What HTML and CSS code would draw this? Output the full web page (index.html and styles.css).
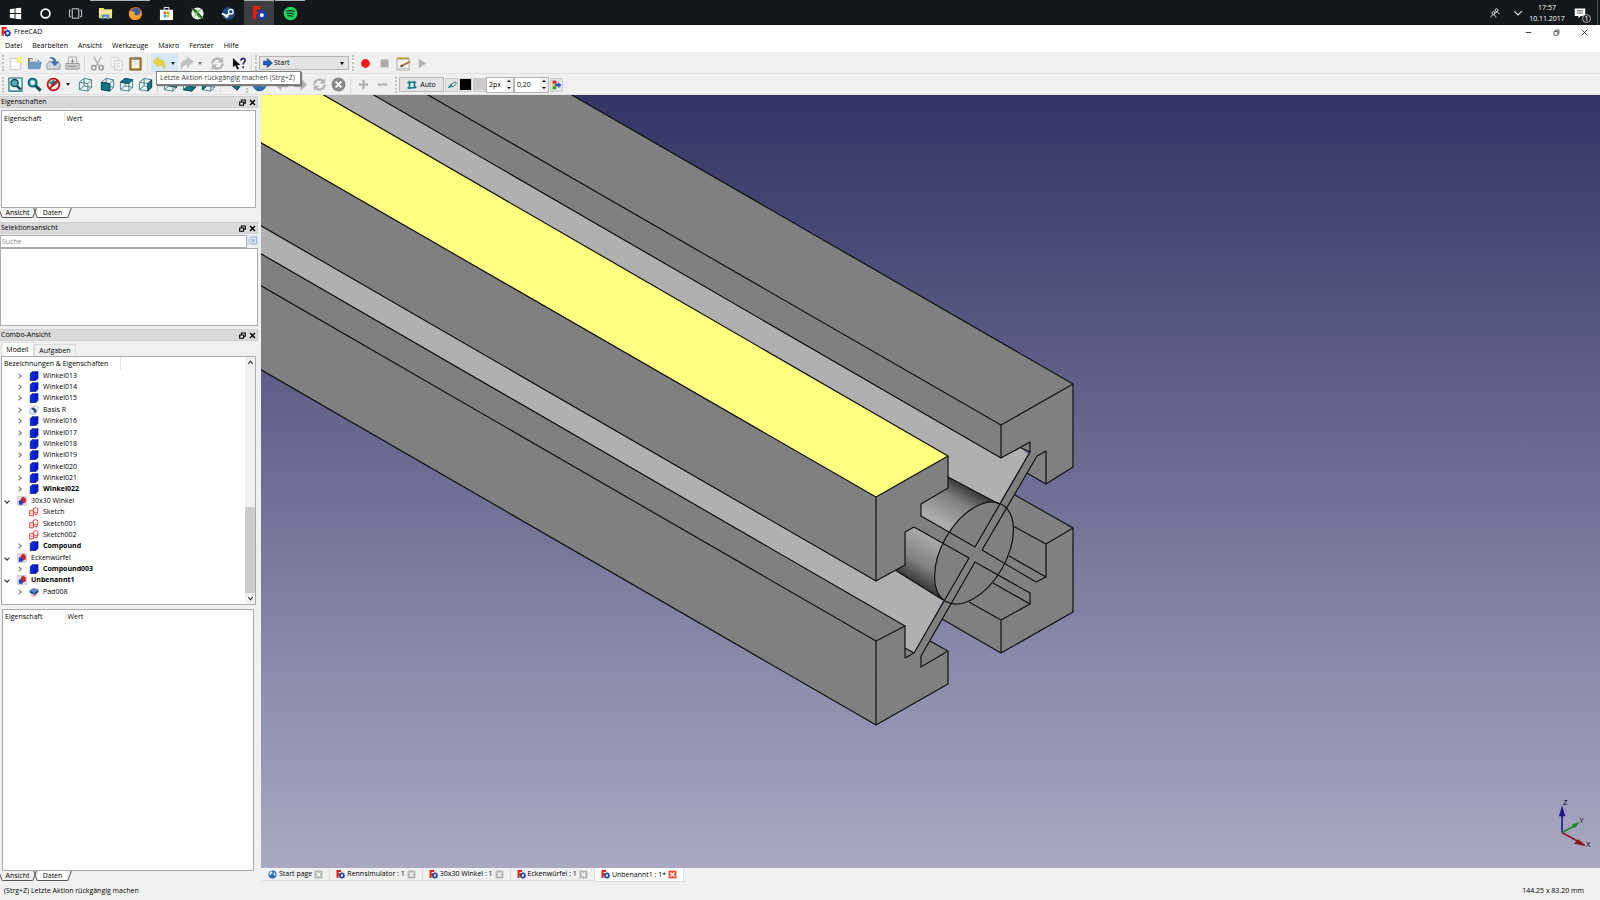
FILE: index.html
```html
<!DOCTYPE html>
<html lang="de">
<head>
    <meta charset="UTF-8">
    <title>FreeCAD</title>
    <link rel="stylesheet" href="styles.css">
</head>
<body>
    <!-- Icons -->
    <svg class="defs" aria-hidden="true">
        <symbol id="i-freecad" viewBox="0 0 16 16">
            <path d="M1 0h8v3.500H4.500V6H7V9.500H4.500V14H1z" fill="#f01a10"/>
            <path d="M10.500 4v11.500M4.800 9.800h11.400M6.500 5.800l8 8M14.500 5.800l-8 8" stroke="#1540a8" stroke-width="2.200"/>
            <circle cx="10.500" cy="9.800" r="3.300" fill="#fff" stroke="#1540a8" stroke-width="2.400"/>
        </symbol>
        <symbol id="i-close" viewBox="0 0 10 10"><path d="M1.500 1.500l7 7M8.500 1.500l-7 7" stroke="currentColor" stroke-width="2"/></symbol>
        <symbol id="i-float" viewBox="0 0 10 10"><path d="M3.500 3.500V1.500H9V6H7M1 4.200h5.500V9H1z" fill="none" stroke="currentColor" stroke-width="1.600"/></symbol>
        <symbol id="i-new" viewBox="0 0 16 16"><path d="M2.500 2.500h7l4 3v9h-11z" fill="#f8f8f8" stroke="#c9c9c9"/><circle cx="12" cy="4" r="3.200" fill="#f5ee66"/><circle cx="12" cy="4" r="1.300" fill="#fffde0"/></symbol>
        <symbol id="i-open" viewBox="0 0 16 16"><path d="M1 2h5l1 2h6v9H1z" fill="#7d8080"/><path d="M3 3h9v6H3z" fill="#ddd"/><path d="M3 6h13l-2 8H1z" fill="#6f9cc8"/></symbol>
        <symbol id="i-save" viewBox="0 0 16 16"><path d="M1 9l2-3h10l2 3v5H1z" fill="#d7dadd" stroke="#8f9498"/><path d="M4 1c5 0 7 2 7 5h3l-4.500 5L5 6h3c0-2-1-3-4-4z" fill="#3e77ac"/></symbol>
        <symbol id="i-print" viewBox="0 0 16 16"><path d="M4 1h8l1 7H3z" fill="#eee" stroke="#aaa"/><path d="M1 8h14v6H1z" fill="#d0d0d0" stroke="#999"/><path d="M3 11h10" stroke="#888"/><path d="M8 3v4M6 5l2 2 2-2" stroke="#888" fill="none"/></symbol>
        <symbol id="i-cut" viewBox="0 0 16 16"><path d="M4 1l6 10M12 1L6 11" stroke="#b3b3b3" stroke-width="1.500"/><circle cx="4" cy="12.500" r="2.300" fill="none" stroke="#999" stroke-width="1.500"/><circle cx="12" cy="12.500" r="2.300" fill="none" stroke="#999" stroke-width="1.500"/></symbol>
        <symbol id="i-copy" viewBox="0 0 16 16"><path d="M2 1.500h8v10H2z" fill="#f4f4f4" stroke="#d8d8d8"/><path d="M6 5h8v10H6z" fill="#f4f4f4" stroke="#ccc"/><path d="M8 8h4M8 10h4M8 12h3" stroke="#d5d5d5"/></symbol>
        <symbol id="i-paste" viewBox="0 0 16 16"><path d="M2 2h12v13H2z" fill="#b98a3a" stroke="#7d5a1c"/><path d="M4 4h8v9H4z" fill="#f5f5f0"/><path d="M5.500 1h5v3h-5z" fill="#888"/><path d="M6 6.500h4M6 8.500h4" stroke="#ccc"/></symbol>
        <symbol id="i-undo" viewBox="0 0 16 16"><path d="M1 6l6-5v3c5 0 8 3 6 10-1-4-3-5-6-5v3z" fill="#edd43a" stroke="#d3b21c" stroke-width=".6"/></symbol>
        <symbol id="i-redo" viewBox="0 0 16 16"><path d="M15 6L9 1v3C4 4 1 7 3 14c1-4 3-5 6-5v3z" fill="#c4c4c4" stroke="#b0b0b0" stroke-width=".6"/></symbol>
        <symbol id="i-refresh" viewBox="0 0 16 16"><path d="M2.500 8a5.500 5.500 0 0 1 9-4M13.500 8a5.500 5.500 0 0 1-9 4" fill="none" stroke="#b4b4b4" stroke-width="2.500"/><path d="M14 1v6H8zM2 15V9h6z" fill="#b4b4b4"/></symbol>
        <symbol id="i-whats" viewBox="0 0 16 16"><path d="M1 2v10l2.500-2 2 4.500 2-1-2-4H9z" fill="#111"/><path d="M9.500 5c0-3.500 5-3 4.500-.5C13.500 7 12 6.500 12 9M12 11v2" fill="none" stroke="#24247a" stroke-width="1.700"/></symbol>
        <symbol id="i-arrow" viewBox="0 0 16 16"><path d="M1 5h6V1l8 7-8 7v-4H1z" fill="#1762c8" stroke="#0c2d6a"/></symbol>
        <symbol id="i-record" viewBox="0 0 16 16"><circle cx="8" cy="8" r="4.700" fill="#f01c1c"/></symbol>
        <symbol id="i-stop" viewBox="0 0 16 16"><path d="M4 4h8v8H4z" fill="#aaa" stroke="#c8c8c8"/></symbol>
        <symbol id="i-macro" viewBox="0 0 16 16"><path d="M1 3h13v12H1z" fill="#f5f5f5" stroke="#aaa"/><path d="M1 1.500h13v2H1z" fill="#b39a49"/><path d="M3 13h9" stroke="#aaa"/><path d="M5 11l10-5" stroke="#b17a35" stroke-width="2"/><path d="M5 11l2-1" stroke="#222" stroke-width="1.500"/></symbol>
        <symbol id="i-play" viewBox="0 0 16 16"><path d="M4 3l8 5-8 5z" fill="#b5b5b5"/></symbol>
        <symbol id="i-fit" viewBox="0 0 16 16"><path d="M1 1h14v14H1z" fill="#e8f3f4" stroke="#0d6878" stroke-width="1.200"/><circle cx="7" cy="6.500" r="3.800" fill="#4fb0bd" stroke="#084c5a" stroke-width="1.500"/><path d="M9.500 9.500l4 4" stroke="#084c5a" stroke-width="2.800"/></symbol>
        <symbol id="i-fitsel" viewBox="0 0 16 16"><circle cx="6" cy="6" r="4.300" fill="#4fb0bd" stroke="#0d6878" stroke-width="2"/><path d="M4 4h4v4H4z" fill="#effcff"/><path d="M9 9l5.500 5.500" stroke="#084c5a" stroke-width="3.200"/></symbol>
        <symbol id="i-nodraw" viewBox="0 0 16 16"><path d="M3 6l5-3 5 3-5 4z" fill="#1c8a98"/><circle cx="8" cy="8" r="6.300" fill="none" stroke="#c91212" stroke-width="2"/><path d="M12.500 3.500l-9 9" stroke="#c91212" stroke-width="2"/></symbol>
        <symbol id="i-iso" viewBox="0 0 16 16"><path d="M1.500 5.500l5-4 8 1.500v8l-4 4-9-1.500zM1.500 5.500l9 1.500 4-4M10.500 7v8M6.500 1.500V9.500l8 1.500M6.500 9.500l-5 4" fill="none" stroke="#2a7886" stroke-width=".9"/></symbol>
        <symbol id="i-front" viewBox="0 0 16 16"><use href="#i-iso"/><path d="M1.500 5.500l9 1.500v8l-9-1.500z" fill="#117585" stroke="#0a4a56"/></symbol>
        <symbol id="i-top" viewBox="0 0 16 16"><use href="#i-iso"/><path d="M1.500 5.500l5-4 8 1.500-4 4z" fill="#117585" stroke="#0a4a56"/></symbol>
        <symbol id="i-right" viewBox="0 0 16 16"><use href="#i-iso"/><path d="M10.500 7l4-4v8l-4 4z" fill="#117585" stroke="#0a4a56"/></symbol>
        <symbol id="i-rear" viewBox="0 0 16 16"><use href="#i-iso"/><path d="M6.500 1.500l8 1.500v8l-8-1.500z" fill="#117585" stroke="#0a4a56"/></symbol>
        <symbol id="i-bottom" viewBox="0 0 16 16"><use href="#i-iso"/><path d="M1.500 13.500l5-4 8 1.500-4 4z" fill="#117585" stroke="#0a4a56"/></symbol>
        <symbol id="i-left" viewBox="0 0 16 16"><use href="#i-iso"/><path d="M1.500 5.500l5-4v8l-5 4z" fill="#117585" stroke="#0a4a56"/></symbol>
        <symbol id="i-measure" viewBox="0 0 16 16"><path d="M1 5l3-3 11 8-3 4z" fill="#1b6f7c" stroke="#0b3940"/></symbol>
        <symbol id="i-globe" viewBox="0 0 16 16"><circle cx="8" cy="8" r="6.800" fill="#2a70b8" stroke="#1c4b80" stroke-width=".8"/><path d="M3 4c3-3 5-2 5 0S5 7 4 10C2 8 2 6 3 4zM10 5c3-1 4 2 3 5-2 1-4-2-3-5z" fill="#d5e8f5"/></symbol>
        <symbol id="i-back" viewBox="0 0 16 16"><path d="M15 5H8V1L1 8l7 7v-4h7z" fill="#b2b2b2"/></symbol>
        <symbol id="i-fwd" viewBox="0 0 16 16"><path d="M1 5h7V1l7 7-7 7v-4H1z" fill="#b2b2b2"/></symbol>
        <symbol id="i-cancel" viewBox="0 0 16 16"><circle cx="8" cy="8" r="7.500" fill="#8b8b8b"/><path d="M5 5l6 6M11 5l-6 6" stroke="#fff" stroke-width="2"/></symbol>
        <symbol id="i-plus" viewBox="0 0 16 16"><path d="M8 3v10M3 8h10" stroke="#b6b6b6" stroke-width="2.600"/></symbol>
        <symbol id="i-minus" viewBox="0 0 16 16"><path d="M3 8h10" stroke="#b6b6b6" stroke-width="2.600"/></symbol>
        <symbol id="i-auto" viewBox="0 0 16 16"><path d="M4 4l8-1v9l-8 1zM1 5l4-3M11 2l3 3M1 12l4 2M11 13l4-2" fill="none" stroke="#187f87" stroke-width="2.600"/></symbol>
        <symbol id="i-pen" viewBox="0 0 16 16"><path d="M1 13l4-6 4-2 1 4-4 3z" fill="#1c8d80"/><path d="M7 7l6-4 2 2-4 5-3 1z" fill="#fff" stroke="#16675f" stroke-width="1.500"/></symbol>
        <symbol id="i-apply" viewBox="0 0 16 16"><path d="M1 1h6v5H1z" fill="#d91e18"/><path d="M1 6h5v4H1z" fill="#e6d020"/><path d="M1 10h6v5H1z" fill="#38a033"/><path d="M5 6h5V3l5 5-5 5v-3H5z" fill="#2455ce"/></symbol>
        <symbol id="i-box" viewBox="0 0 16 16"><path d="M2 4l3-3h9.500v11l-4 3.500H2z" fill="#0526e8" stroke="#06105e"/><path d="M10 4.500V15M10 4.500l4-3" stroke="#06105e" stroke-width="1.300"/></symbol>
        <symbol id="i-basis" viewBox="0 0 16 16"><circle cx="10" cy="5.500" r="4.500" fill="none" stroke="#8791bd"/><circle cx="6.500" cy="9.500" r="5.500" fill="#eef1fb" stroke="#8791bd"/><path d="M4 5c5-1 8 2 8 7H7C9 9 7 7 4 7z" fill="#123c8c"/></symbol>
        <symbol id="i-doc" viewBox="0 0 16 16"><path d="M1 1h14v14H1z" fill="#e3e3ec" stroke="#b5b5bd"/><path d="M6 4l4-3 4 3v6l-4 2-4-2z" fill="#d21d24"/><path d="M3 7h6v7H3z" fill="#1e3ec6"/></symbol>
        <symbol id="i-sketch" viewBox="0 0 16 16"><circle cx="10.500" cy="5" r="4" fill="none" stroke="#e0362d" stroke-width="1.500"/><path d="M1 6h6v8H1zM7 10l5 3 2-5M3 9l2 2" fill="none" stroke="#e0362d" stroke-width="1.500"/></symbol>
        <symbol id="i-pad" viewBox="0 0 16 16"><path d="M1 5l6-3.500 8 2.500-6 5z" fill="#5488cf"/><path d="M1 5l8 4v4l-8-4z" fill="#1e4fa0"/><path d="M9 9l6-5v4l-6 5z" fill="#123a80"/><path d="M3 12.500c3 3 8 2.500 10-1" fill="none" stroke="#e0362d" stroke-width="1.200"/></symbol>
        <symbol id="i-tabclose" viewBox="0 0 16 16"><path d="M1 1h14v14H1z" fill="currentColor"/><path d="M4.500 4.500l7 7M11.500 4.500l-7 7" stroke="#fff" stroke-width="2.200"/></symbol>
    </svg>

    <header class="taskbar">
        <nav class="tasks">
            <button aria-label="Start"><svg viewBox="0 0 16 16"><path d="M2 3.500l5-.8v4.800H2zM8 2.500L14 1.800v5.700H8zM2 8.500h5v4.800l-5-.8zM8 8.500h6v5.700l-6-.7z" fill="#fff"/></svg></button>
            <button aria-label="Suche"><svg viewBox="0 0 16 16"><circle cx="8" cy="8" r="4.700" fill="none" stroke="#fff" stroke-width="1.800"/></svg></button>
            <button aria-label="Taskansicht"><svg viewBox="0 0 16 16"><path d="M4.500 3h7v10h-7zM3 4.500H1.500v7H3M13 4.500h1.500v7H13" fill="none" stroke="#ddd"/></svg></button>
            <button class="open" aria-label="Explorer"><svg viewBox="0 0 16 16"><path d="M1 2h5l1 1.500h8V13H1z" fill="#f7d978"/><path d="M1 5h14v3H1z" fill="#fbe9a8"/><path d="M4 9h8v5h-2v-2.500H6V14H4z" fill="#3e9ad6"/></svg></button>
            <button class="open" aria-label="Firefox"><svg viewBox="0 0 16 16"><circle cx="8" cy="8" r="7" fill="#e8671c"/><circle cx="8.500" cy="6.500" r="4.500" fill="#2f62a8"/><path d="M1.500 5C4 5 5 6 7.500 6.500 6 8 7 10 9.500 10c3 0 4.500-3 4-6 2.500 5 0 11-6 11C3 15 0 11 1.500 5z" fill="#f6a02a"/></svg></button>
            <button aria-label="Store"><svg viewBox="0 0 16 16"><path d="M5.500 4V1.500h5V4" fill="none" stroke="#fff"/><path d="M1 4h14v11H1z" fill="#fff"/><path d="M5 6h2.700v2.700H5z" fill="#f05022"/><path d="M8.300 6H11v2.700H8.300z" fill="#7fb900"/><path d="M5 9.300h2.700V12H5z" fill="#01a4ef"/><path d="M8.300 9.300H11V12H8.300z" fill="#ffb901"/></svg></button>
            <button aria-label="Xbox"><svg viewBox="0 0 16 16"><circle cx="8" cy="8" r="6.500" fill="#eaf5e4"/><path d="M1 2l6 2 8 10-6-2zM13 2c-5 3-8 7-9 11 3-5 6-8 9-11z" fill="#3b9c2e"/><path d="M2 2l11 10" stroke="#222"/></svg></button>
            <button aria-label="Steam"><svg viewBox="0 0 16 16"><circle cx="8" cy="8" r="6.800" fill="#1f4a86"/><circle cx="10.500" cy="6" r="2.500" fill="#1f4a86" stroke="#fff" stroke-width="1.300"/><path d="M1 8l5 2.500L9 8" stroke="#fff" stroke-width="2" fill="none"/><circle cx="6" cy="11" r="1.800" fill="#fff"/></svg></button>
            <button class="open active" aria-label="FreeCAD"><svg><use href="#i-freecad"/></svg></button>
            <button class="open" aria-label="Spotify"><svg viewBox="0 0 16 16"><circle cx="8" cy="8" r="7.300" fill="#1ed760"/><path d="M3.500 5.500c3-1 6.500-.8 9.200.8M4 8.200c2.700-.8 5.500-.5 7.800.8M4.500 10.700c2.200-.6 4.300-.4 6.300.7" fill="none" stroke="#10301c" stroke-width="1.300"/></svg></button>
        </nav>
        <div class="tray">
            <button aria-label="Kontakte"><svg viewBox="0 0 16 16"><g fill="none" stroke="#e8e8e8" stroke-width="1.500"><circle cx="10.500" cy="3.500" r="2.300"/><path d="M8 9c1-3.500 5.500-3.500 6.500 1"/><circle cx="5.500" cy="8" r="2.300"/><path d="M1.500 15c0-5.500 7.500-5.500 8 0"/></g></svg></button>
            <button aria-label="Ausgeblendete Symbole"><svg viewBox="0 0 16 16"><path d="M2 5l6 6 6-6" fill="none" stroke="#e8e8e8" stroke-width="1.700"/></svg></button>
            <time class="clock">17:57<br>10.11.2017</time>
            <button class="notes" aria-label="Mitteilungen"><svg viewBox="0 0 16 16"><path d="M1 2h14v10H9l-3 3v-3H1z" fill="#fff"/><path d="M4 5h8M4 8h8" stroke="#222"/></svg><span class="count">1</span></button>
        </div>
    </header>

    <div class="titlebar">
        <svg class="ico s10"><use href="#i-freecad"/></svg>
        <span>FreeCAD</span>
        <div class="win-buttons">
            <button aria-label="Minimieren"><svg viewBox="0 0 10 10"><path d="M1 5h8" stroke="#222" stroke-width="1.200"/></svg></button>
            <button aria-label="Wiederherstellen"><svg viewBox="0 0 10 10"><path d="M3.500 3V1.500h5v5H7M1.500 3.500H7V9H1.500z" fill="none" stroke="#222"/></svg></button>
            <button aria-label="Schließen"><svg viewBox="0 0 10 10"><path d="M1 1l8 8M9 1L1 9" stroke="#222" stroke-width="1.200"/></svg></button>
        </div>
    </div>

    <nav class="menubar">
        <button>Datei</button>
        <button>Bearbeiten</button>
        <button>Ansicht</button>
        <button>Werkzeuge</button>
        <button>Makro</button>
        <button>Fenster</button>
        <button>Hilfe</button>
    </nav>

    <div class="toolbar main-tools">
        <i class="handle"></i>
        <button aria-label="Neu"><svg><use href="#i-new"/></svg></button>
        <button aria-label="Öffnen"><svg><use href="#i-open"/></svg></button>
        <button aria-label="Speichern"><svg><use href="#i-save"/></svg></button>
        <button aria-label="Drucken"><svg><use href="#i-print"/></svg></button>
        <i class="sep"></i>
        <button aria-label="Ausschneiden"><svg><use href="#i-cut"/></svg></button>
        <button aria-label="Kopieren"><svg><use href="#i-copy"/></svg></button>
        <button aria-label="Einfügen"><svg><use href="#i-paste"/></svg></button>
        <i class="sep"></i>
        <div class="split hover">
            <button aria-label="Rückgängig"><svg><use href="#i-undo"/></svg></button>
            <button class="drop" aria-label="Rückgängig-Liste"></button>
            <div class="tooltip">Letzte Aktion rückgängig machen (Strg+Z)</div>
        </div>
        <div class="split">
            <button aria-label="Wiederherstellen"><svg><use href="#i-redo"/></svg></button>
            <button class="drop dim" aria-label="Wiederherstellen-Liste"></button>
        </div>
        <i class="gap"></i>
        <button aria-label="Aktualisieren"><svg><use href="#i-refresh"/></svg></button>
        <i class="gap"></i>
        <button aria-label="Direkthilfe"><svg><use href="#i-whats"/></svg></button>
        <i class="sep"></i>
        <i class="handle"></i>
        <div class="workbench">
            <svg class="ico s10"><use href="#i-arrow"/></svg>
            <select aria-label="Arbeitsbereich">
                <option selected>Start</option>
                <option>Part Design</option>
            </select>
        </div>
        <i class="gap"></i>
        <i class="handle"></i>
        <button aria-label="Makro aufzeichnen"><svg><use href="#i-record"/></svg></button>
        <button aria-label="Aufzeichnung beenden"><svg><use href="#i-stop"/></svg></button>
        <button aria-label="Makros"><svg><use href="#i-macro"/></svg></button>
        <button aria-label="Makro ausführen"><svg><use href="#i-play"/></svg></button>
    </div>

    <div class="toolbar view-tools">
        <i class="handle"></i>
        <button aria-label="Alles einpassen"><svg><use href="#i-fit"/></svg></button>
        <button aria-label="Auswahl einpassen"><svg><use href="#i-fitsel"/></svg></button>
        <button aria-label="Darstellungsart"><svg><use href="#i-nodraw"/></svg></button>
        <button class="drop" aria-label="Darstellungsarten"></button>
        <i class="gap"></i>
        <button aria-label="Axonometrisch"><svg><use href="#i-iso"/></svg></button>
        <i class="gap"></i>
        <button aria-label="Vorne"><svg><use href="#i-front"/></svg></button>
        <button aria-label="Oben"><svg><use href="#i-top"/></svg></button>
        <button aria-label="Rechts"><svg><use href="#i-right"/></svg></button>
        <i class="sep"></i>
        <button aria-label="Hinten"><svg><use href="#i-rear"/></svg></button>
        <button aria-label="Unten"><svg><use href="#i-bottom"/></svg></button>
        <button aria-label="Links"><svg><use href="#i-left"/></svg></button>
        <i class="sep"></i>
        <button aria-label="Messen"><svg><use href="#i-measure"/></svg></button>
        <i class="gap"></i>
        <i class="handle"></i>
        <button aria-label="Webseite"><svg><use href="#i-globe"/></svg></button>
        <i class="gap"></i>
        <button aria-label="Zurück"><svg><use href="#i-back"/></svg></button>
        <button aria-label="Vor"><svg><use href="#i-fwd"/></svg></button>
        <button aria-label="Neu laden"><svg><use href="#i-refresh"/></svg></button>
        <button aria-label="Abbrechen"><svg><use href="#i-cancel"/></svg></button>
        <i class="sep"></i>
        <button aria-label="Vergrößern"><svg><use href="#i-plus"/></svg></button>
        <button aria-label="Verkleinern"><svg><use href="#i-minus"/></svg></button>
        <i class="gap"></i>
        <i class="handle"></i>
        <div class="draft">
            <button class="auto"><svg><use href="#i-auto"/></svg>Auto</button>
            <button class="flat" aria-label="Konstruktionsmodus"><svg><use href="#i-pen"/></svg></button>
            <button class="flat" aria-label="Linienfarbe"><b class="swatch black"></b></button>
            <button class="flat" aria-label="Flächenfarbe"><b class="swatch grey"></b></button>
            <div class="spin"><input type="text" value="2px" size="1" aria-label="Linienbreite"><span><button aria-label="Mehr"></button><button aria-label="Weniger"></button></span></div>
            <div class="spin wide"><input type="text" value="0,20" size="1" aria-label="Textgröße"><span><button aria-label="Mehr"></button><button aria-label="Weniger"></button></span></div>
            <button class="flat" aria-label="Anwenden"><svg><use href="#i-apply"/></svg></button>
        </div>
    </div>

    <main class="workspace">
        <aside class="docks">
            <section class="dock">
                <h2>Eigenschaften<button aria-label="Abdocken"><svg><use href="#i-float"/></svg></button><button aria-label="Schließen"><svg><use href="#i-close"/></svg></button></h2>
                <div class="frame props-small">
                    <table><thead><tr><th>Eigenschaft</th><th>Wert</th></tr></thead></table>
                </div>
                <div class="low-tabs"><button>Ansicht</button><button class="current">Daten</button></div>
            </section>

            <section class="dock">
                <h2>Selektionsansicht<button aria-label="Abdocken"><svg><use href="#i-float"/></svg></button><button aria-label="Schließen"><svg><use href="#i-close"/></svg></button></h2>
                <div class="search">
                    <input type="text" placeholder="Suche" aria-label="Suche">
                    <button aria-label="Suche löschen"><svg viewBox="0 0 16 16"><path d="M1 8l5-6h9v12H6z" fill="#dce8f6" stroke="#6d93c4"/><path d="M7 5.500l5 5M12 5.500l-5 5" stroke="#4a74ac" stroke-width="1.300"/></svg></button>
                </div>
                <div class="frame selection"></div>
            </section>

            <section class="dock combo">
                <h2>Combo-Ansicht<button aria-label="Abdocken"><svg><use href="#i-float"/></svg></button><button aria-label="Schließen"><svg><use href="#i-close"/></svg></button></h2>
                <div class="top-tabs"><button class="current">Modell</button><button>Aufgaben</button></div>
                <div class="frame tree-frame">
                    <div class="tree">
                        <div class="tree-head"><span>Bezeichnungen &amp; Eigenschaften</span></div>
                        <ul>
                            <li><i class="chev"></i><svg><use href="#i-box"/></svg>Winkel013</li>
                            <li><i class="chev"></i><svg><use href="#i-box"/></svg>Winkel014</li>
                            <li><i class="chev"></i><svg><use href="#i-box"/></svg>Winkel015</li>
                            <li><i class="chev"></i><svg><use href="#i-basis"/></svg>Basis R</li>
                            <li><i class="chev"></i><svg><use href="#i-box"/></svg>Winkel016</li>
                            <li><i class="chev"></i><svg><use href="#i-box"/></svg>Winkel017</li>
                            <li><i class="chev"></i><svg><use href="#i-box"/></svg>Winkel018</li>
                            <li><i class="chev"></i><svg><use href="#i-box"/></svg>Winkel019</li>
                            <li><i class="chev"></i><svg><use href="#i-box"/></svg>Winkel020</li>
                            <li><i class="chev"></i><svg><use href="#i-box"/></svg>Winkel021</li>
                            <li class="bold"><i class="chev"></i><svg><use href="#i-box"/></svg>Winkel022</li>
                            <li class="doc"><i class="chev down"></i><svg><use href="#i-doc"/></svg>30x30 Winkel</li>
                            <li><i class="chev none"></i><svg><use href="#i-sketch"/></svg>Sketch</li>
                            <li><i class="chev none"></i><svg><use href="#i-sketch"/></svg>Sketch001</li>
                            <li><i class="chev none"></i><svg><use href="#i-sketch"/></svg>Sketch002</li>
                            <li class="bold"><i class="chev"></i><svg><use href="#i-box"/></svg>Compound</li>
                            <li class="doc"><i class="chev down"></i><svg><use href="#i-doc"/></svg>Eckenwürfel</li>
                            <li class="bold"><i class="chev"></i><svg><use href="#i-box"/></svg>Compound003</li>
                            <li class="doc bold"><i class="chev down"></i><svg><use href="#i-doc"/></svg>Unbenannt1</li>
                            <li><i class="chev"></i><svg><use href="#i-pad"/></svg>Pad008</li>
                        </ul>
                    </div>
                    <div class="scrollbar">
                        <button aria-label="Nach oben"><svg viewBox="0 0 10 10"><path d="M2 7l3-4 3 4" fill="none" stroke="#333" stroke-width="1.500"/></svg></button>
                        <div class="track"><div class="thumb"></div></div>
                        <button aria-label="Nach unten"><svg viewBox="0 0 10 10"><path d="M2 3l3 4 3-4" fill="none" stroke="#333" stroke-width="1.500"/></svg></button>
                    </div>
                </div>
                <div class="frame props-large">
                    <table><thead><tr><th>Eigenschaft</th><th>Wert</th></tr></thead></table>
                </div>
                <div class="low-tabs"><button>Ansicht</button><button class="current">Daten</button></div>
            </section>
        </aside>

        <section class="view">
            <div class="scene">
                <svg class="model" viewBox="261 95 1339 773" preserveAspectRatio="xMinYMin slice">
                    <defs>
                        <linearGradient id="cylTop" gradientUnits="userSpaceOnUse" x1="975" y1="491" x2="953" y2="529">
                            <stop offset="0" stop-color="#383838"/><stop offset=".4" stop-color="#808080"/><stop offset="1" stop-color="#acacac"/>
                        </linearGradient>
                        <linearGradient id="cylLow" gradientUnits="userSpaceOnUse" x1="943" y1="543" x2="919" y2="585">
                            <stop offset="0" stop-color="#acacac"/><stop offset=".6" stop-color="#808080"/><stop offset="1" stop-color="#383838"/>
                        </linearGradient>
                    </defs>
                    <!-- faces -->
                    <g>
                        <path d="M251 24L1001 458L1030 442V452L1037 456L1046 451V484L1073 467V384L251 -90z" fill="#808080"/>
                        <path d="M1027 473L1046 484V451L1037 456z" fill="#808080"/>
                        <path d="M1015 495L1073 528V612L1001 653L942 619L975 540z" fill="#808080"/>
                        <path d="M251 53L948 456V477L999 504L1028 454L1021 448L1001 458L251 24z" fill="#b0b0b0"/>
                        <path d="M1021 448L1030 452V442z" fill="#808080"/>
                        <path d="M251 220L876 581L895 570L943 600L914 653L905 648V626L251 248z" fill="#b0b0b0"/>
                        <path d="M251 248L905 626V648L914 653L921 656L930 641L948 651V684L876 725L251 364z" fill="#808080"/>
                        <path d="M948 477L999 504L960 540L921 516V504L948 488z" fill="url(#cylTop)"/>
                        <path d="M905 532L914 527L950 547L943 600L895 570L905 565z" fill="url(#cylLow)"/>
                        <ellipse cx="974" cy="553" rx="56" ry="32" transform="rotate(-60 974 553)" fill="#808080"/>
                        <path d="M251 137L876 497L948 456V488L921 504V516L975 547L969 558L914 527L905 532V565L876 581L251 220z" fill="#808080"/>
                        <path d="M251 53L948 456L876 497L251 137z" fill="#ffff80"/>
                        <path d="M975 547L1028 454L1030 452L1037 456L982 550L975 562L921 656L914 653L969 558z" fill="#808080"/>
                    </g>
                    <!-- edges -->
                    <g fill="none" stroke="#111" stroke-width="1.200" stroke-linejoin="round">
                        <path d="M251 24L1001 458L1030 442V452L1021 448M1001 458V425L1073 384M1001 425L251 -7M251 -90L1073 384V467L1046 484V451L1037 456M1027 473L1046 484"/>
                        <path d="M1015 495L1073 528V612L1001 653L942 619M1073 528L1046 544L1013 526M1046 544V577L1009 556M1001 653V620L969 602M1001 620L1030 604L993 583"/>
                        <path d="M251 220L876 581L905 565V532L914 527L969 558L914 653L905 648M905 658L914 653M905 658V626L251 248"/>
                        <path d="M251 280L876 641L905 626M876 641V725M251 364L876 725L948 684V651L921 667V656L975 562L1030 593V604M948 651L930 641"/>
                        <path d="M251 53L948 456L876 497L251 137M876 497V581M948 456V488L921 504V516L975 547L1030 452M1037 456L982 550L1036 582L1046 577"/>
                        <path d="M948 477L999 504M895 570L943 600"/>
                        <ellipse cx="974" cy="553" rx="56" ry="32" transform="rotate(-60 974 553)"/>
                    </g>
                </svg>
                <svg class="axes" viewBox="0 0 48 48">
                    <path d="M13 30V8" stroke="#1a1a8c" stroke-width="1.500"/><path d="M13 5l3 10h-6z" fill="#1a1a8c"/>
                    <path d="M13 30l13-7" stroke="#1c8c1c" stroke-width="1.500"/><path d="M28 21l-3 4-2-2z" fill="#1c8c1c" stroke="#1c8c1c"/>
                    <path d="M13 30l16 9" stroke="#8c1a1a" stroke-width="1.500"/><path d="M34 42l-6-5-3 3z" fill="#8c1a1a" stroke="#8c1a1a"/>
                    <text x="14" y="5">Z</text><text x="29" y="21">Y</text><text x="35" y="43">X</text>
                </svg>
            </div>
            <nav class="doc-tabs">
                <div class="tab"><svg><use href="#i-globe"/></svg><span>Start page</span><button aria-label="Schließen"><svg><use href="#i-tabclose"/></svg></button></div>
                <div class="tab"><svg><use href="#i-freecad"/></svg><span>Rennsimulator : 1</span><button aria-label="Schließen"><svg><use href="#i-tabclose"/></svg></button></div>
                <div class="tab"><svg><use href="#i-freecad"/></svg><span>30x30 Winkel : 1</span><button aria-label="Schließen"><svg><use href="#i-tabclose"/></svg></button></div>
                <div class="tab"><svg><use href="#i-freecad"/></svg><span>Eckenwürfel : 1</span><button aria-label="Schließen"><svg><use href="#i-tabclose"/></svg></button></div>
                <div class="tab current"><svg><use href="#i-freecad"/></svg><span>Unbenannt1 : 1*</span><button aria-label="Schließen"><svg><use href="#i-tabclose"/></svg></button></div>
            </nav>
        </section>
    </main>

    <footer class="statusbar">
        <span>(Strg+Z) Letzte Aktion rückgängig machen</span>
        <span>144.25 x 83.20 mm</span>
    </footer>
</body>
</html>
```
FILE: styles.css
```css
* {
    box-sizing: border-box;
}
body {
    margin: 0;
    height: 100vh;
    display: flex;
    flex-direction: column;
    overflow: hidden;
    background: #f0f0f0;
    color: #000;
    font-family: "Open Sans", "Noto Sans", sans-serif;
    font-size: 7px;
    line-height: 10px;
}
button, input, select {
    font: inherit;
    color: inherit;
    margin: 0;
    padding: 0;
    border: 0;
    background: none;
}
button {
    display: flex;
    align-items: center;
    justify-content: center;
}
svg {
    display: block;
    flex: none;
}
.defs {
    position: absolute;
    width: 0;
    height: 0;
}
.s10 {
    width: 10px;
    height: 10px;
}

/* Windows taskbar */
.taskbar {
    display: flex;
    justify-content: space-between;
    flex: 0 0 25px;
    background: #14181a;
    color: #fff;
}
.tasks, .tray {
    display: flex;
}
.tasks button {
    width: 30px;
    border-top: 1px solid transparent;
    margin-right: 1px;
}
.tasks button:nth-child(-n+4) {
    margin-right: 0;
}
.tasks svg {
    width: 15px;
    height: 15px;
}
.tasks .open {
    border-top-color: #a9b4bb;
}
.tasks .active {
    background: #3c4042;
}
.tray {
    align-items: center;
    padding-right: 2px;
    border-right: 1px solid #555;
    margin-right: 2px;
}
.tray button {
    width: 23px;
}
.tray svg {
    width: 10px;
    height: 10px;
}
.clock {
    width: 36px;
    line-height: 11px;
    text-align: center;
    white-space: nowrap;
}
.tray .notes {
    position: relative;
    width: 30px;
}
.notes svg {
    width: 12px;
    height: 12px;
}
.count {
    position: absolute;
    right: 4px;
    bottom: -4px;
    width: 9px;
    height: 9px;
    border: 1px solid #aaa;
    border-radius: 50%;
    background: #222;
    line-height: 7px;
}

/* Title and menu */
.titlebar {
    display: flex;
    align-items: center;
    flex: 0 0 14px;
    padding-left: 1px;
    gap: 3px;
    background: #fff;
}
.win-buttons {
    display: flex;
    margin-left: auto;
    padding-right: 2px;
}
.win-buttons button {
    width: 28px;
    height: 13px;
}
.win-buttons svg {
    width: 7px;
    height: 7px;
}
.menubar {
    display: flex;
    flex: 0 0 13px;
    gap: 10px;
    padding-left: 5px;
    background: #fff;
}

/* Toolbars */
.toolbar {
    display: flex;
    align-items: center;
    flex: 0 0 21px;
    padding-top: 1px;
    padding-left: 2px;
}
.view-tools {
    flex-basis: 22px;
    border-top: 1px solid #e2e2e2;
    border-bottom: 1px solid #e2e2e2;
}
.toolbar > button {
    width: 19px;
    height: 18px;
}
.toolbar button svg {
    width: 15px;
    height: 15px;
}
.handle {
    width: 3px;
    height: 16px;
    margin-right: 1px;
    border-left: 2px dotted #c4c4c4;
}
.sep {
    position: relative;
    width: 6px;
    height: 16px;
}
.sep::after {
    content: "";
    position: absolute;
    left: 2px;
    height: 100%;
    border-left: 1px solid #dadada;
}
.gap {
    width: 3px;
}
.split {
    position: relative;
    display: flex;
    height: 18px;
}
.split button {
    width: 17px;
}
.split .drop, .toolbar .drop {
    width: 10px;
}
.hover {
    background: #d5e8f8;
}
.drop::after {
    content: "";
    border: 2px solid transparent;
    border-top: 3px solid #222;
    border-bottom: 0;
}
.dim::after {
    border-top-color: #777;
}
.tooltip {
    position: absolute;
    z-index: 2;
    top: 17px;
    left: 5px;
    padding: 1px 5px 1px 3px;
    border: 1px solid #808080;
    background: #fff;
    box-shadow: 1px 1px 1px #777;
    color: #444;
    white-space: nowrap;
}
.workbench {
    display: flex;
    align-items: center;
    position: relative;
    width: 90px;
    height: 14px;
    padding-left: 3px;
    border: 1px solid #b5b5b5;
    background: #e4e4e4;
}
.workbench select {
    flex: 1;
    padding-left: 1px;
    appearance: none;
}
.workbench::after {
    content: "";
    margin-right: 4px;
    border: 2px solid transparent;
    border-top: 3px solid #111;
    border-bottom: 0;
}
.draft {
    display: flex;
    align-items: center;
}
.draft .auto {
    width: 45px;
    height: 15px;
    gap: 3px;
    border: 1px solid #bbb;
    background: #e4e4e4;
}
.draft .auto svg {
    width: 10px;
    height: 10px;
}
.draft .flat {
    width: 13px;
    height: 14px;
    margin-left: 1px;
    border: 1px solid #ccc;
    background: #e4e4e4;
}
.draft .flat svg {
    width: 10px;
    height: 10px;
}
.swatch {
    width: 11px;
    height: 11px;
}
.black {
    background: #000;
}
.grey {
    background: #ccc;
}
.spin {
    display: flex;
    width: 28px;
    height: 16px;
    border: 1px solid #b5b5b5;
    background: #fff;
}
.wide {
    width: 35px;
}
.spin input {
    flex: 1;
    min-width: 0;
    padding-left: 2px;
}
.spin span {
    width: 8px;
    background: #f0f0f0;
}
.spin span button {
    width: 8px;
    height: 7px;
}
.spin span button::after {
    content: "";
    border: 2px solid transparent;
    border-top: 0;
    border-bottom: 2px solid #111;
}
.spin span button:last-child::after {
    border-top: 2px solid #111;
    border-bottom: 0;
}

/* Docks */
.workspace {
    display: flex;
    flex: 1;
    min-height: 0;
}
.docks {
    display: flex;
    flex-direction: column;
    flex: 0 0 261px;
    gap: 3px;
    padding-top: 1px;
    padding-right: 3px;
}
.dock {
    display: flex;
    flex-direction: column;
}
.dock h2 {
    display: flex;
    align-items: center;
    height: 12px;
    margin: 0 0 1px;
    padding-left: 1px;
    border: 1px solid #cfcfcf;
    border-left: 0;
    background: #dadada;
    font-size: 7px;
    font-weight: normal;
}
.dock h2 button {
    width: 10px;
}
.dock h2 button:first-of-type {
    margin-left: auto;
}
.dock h2 svg {
    width: 7px;
    height: 7px;
}
.frame {
    border: 1px solid #a9abb3;
    background: #fff;
}
table {
    border-collapse: collapse;
}
th {
    width: 62px;
    height: 15px;
    padding: 0 0 0 2px;
    border-right: 1px solid #e5e5e5;
    font-weight: normal;
    text-align: left;
}
th:last-child {
    border: 0;
}
.props-small {
    height: 98px;
    margin: 1px 2px 0 1px;
}
.low-tabs {
    display: flex;
    height: 11px;
    padding-left: 3px;
}
.low-tabs button {
    position: relative;
    width: 29px;
    height: 10px;
    margin-right: 6px;
    border-bottom: 1px solid #555;
}
.low-tabs .current {
    background: #fff;
}
.low-tabs button::before, .low-tabs button::after {
    content: "";
    position: absolute;
    top: 0;
    left: -3px;
    width: 4px;
    height: 10px;
    border-left: 1px solid #555;
    transform: skewX(20deg);
}
.low-tabs button::after {
    left: auto;
    right: -3px;
    border-left: 0;
    border-right: 1px solid #555;
    transform: skewX(-20deg);
}
.search {
    display: flex;
    height: 13px;
}
.search input {
    flex: 1;
    padding-left: 1px;
    border: 1px solid #a9abb3;
    background: #fff;
}
.search input::placeholder {
    color: #888;
}
.search button {
    width: 11px;
    height: 10px;
    background: #dde3ea;
}
.search button svg {
    width: 9px;
    height: 9px;
}
.selection {
    height: 78px;
}
.combo {
    flex: 1;
    min-height: 0;
}
.top-tabs {
    display: flex;
    align-items: flex-end;
    height: 14px;
    padding-left: 1px;
}
.top-tabs button {
    width: 42px;
    height: 12px;
    border: 1px solid #ddd;
    border-bottom: 0;
}
.top-tabs .current {
    width: 33px;
    height: 14px;
    background: #fff;
}
.tree-frame {
    display: flex;
    flex: 248;
    min-height: 0;
    margin: 0 2px 4px 1px;
}
.tree {
    display: flex;
    flex-direction: column;
    flex: 1;
    padding-bottom: 6px;
}
.tree-head {
    padding-left: 2px;
}
.tree-head span {
    display: inline-block;
    width: 117px;
    height: 13px;
    line-height: 13px;
    border-right: 1px solid #e5e5e5;
}
.tree ul {
    display: flex;
    flex-direction: column;
    flex: 1;
    margin: 0;
    padding: 0;
    list-style: none;
}
.tree li {
    display: flex;
    align-items: center;
    flex: 1;
    padding-left: 15px;
}
.tree li svg {
    width: 10px;
    height: 10px;
    margin: 0 4px 0 8px;
}
.tree .doc {
    padding-left: 3px;
}
.tree .bold {
    font-weight: bold;
}
.chev {
    width: 4px;
    height: 4px;
    border: 1px solid #777;
    border-width: 1px 1px 0 0;
    transform: rotate(45deg);
}
.down {
    border-color: #222;
    transform: rotate(135deg);
}
.none {
    visibility: hidden;
}
.scrollbar {
    display: flex;
    flex-direction: column;
    width: 10px;
    background: #f0f0f0;
}
.scrollbar button {
    height: 11px;
}
.scrollbar svg {
    width: 7px;
    height: 7px;
}
.track {
    display: flex;
    flex-direction: column;
    justify-content: flex-end;
    flex: 1;
}
.thumb {
    height: 38%;
    background: #cdcdcd;
}
.props-large {
    flex: 262;
    min-height: 0;
    margin: 0 4px 0 2px;
}

/* 3D view */
.view {
    display: flex;
    flex-direction: column;
    flex: 1;
    min-width: 0;
}
.scene {
    position: relative;
    flex: 1;
    min-height: 0;
    overflow: hidden;
    background: linear-gradient(#333366, #a9a9c3);
}
.model {
    width: 100%;
    height: 100%;
}
.axes {
    position: absolute;
    right: 0;
    bottom: 16px;
    width: 52px;
    height: 52px;
    font-size: 7px;
    overflow: visible;
}
.doc-tabs {
    display: flex;
    height: 14px;
    padding-left: 1px;
}
.tab {
    display: flex;
    align-items: center;
    gap: 2px;
    height: 13px;
    padding: 0 6px;
    border-right: 1px solid #ddd;
    border-bottom: 1px solid #ddd;
}
.tab svg {
    width: 9px;
    height: 9px;
}
.tab button {
    color: #b5b5b5;
}
.tab.current {
    height: 14px;
    background: #fff;
}
.current button {
    color: #e0573a;
}

.statusbar {
    display: flex;
    align-items: center;
    justify-content: space-between;
    flex: 0 0 18px;
    padding: 0 16px 0 4px;
}
```
